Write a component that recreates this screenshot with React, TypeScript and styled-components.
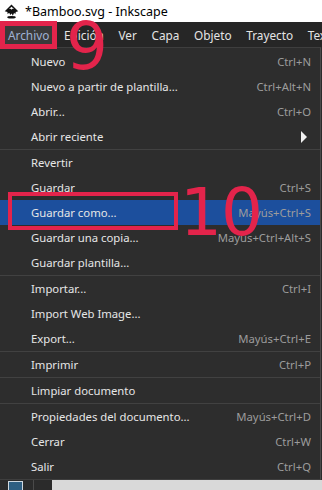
import React from "react";
import styled, { createGlobalStyle } from "styled-components";

type MenuEntry =
  | { kind: "item"; label: string; shortcut?: string; submenu?: boolean; active?: boolean }
  | { kind: "sep" };

const entries: MenuEntry[] = [
  { kind: "item", label: "Nuevo", shortcut: "Ctrl+N" },
  { kind: "item", label: "Nuevo a partir de plantilla...", shortcut: "Ctrl+Alt+N" },
  { kind: "item", label: "Abrir...", shortcut: "Ctrl+O" },
  { kind: "item", label: "Abrir reciente", submenu: true },
  { kind: "sep" },
  { kind: "item", label: "Revertir" },
  { kind: "item", label: "Guardar", shortcut: "Ctrl+S" },
  { kind: "item", label: "Guardar como...", shortcut: "Mayús+Ctrl+S", active: true },
  { kind: "item", label: "Guardar una copia...", shortcut: "Mayús+Ctrl+Alt+S" },
  { kind: "item", label: "Guardar plantilla..." },
  { kind: "sep" },
  { kind: "item", label: "Importar...", shortcut: "Ctrl+I" },
  { kind: "item", label: "Import Web Image..." },
  { kind: "item", label: "Export...", shortcut: "Mayús+Ctrl+E" },
  { kind: "sep" },
  { kind: "item", label: "Imprimir", shortcut: "Ctrl+P" },
  { kind: "sep" },
  { kind: "item", label: "Limpiar documento" },
  { kind: "sep" },
  { kind: "item", label: "Propiedades del documento...", shortcut: "Mayús+Ctrl+D" },
  { kind: "item", label: "Cerrar", shortcut: "Ctrl+W" },
  { kind: "item", label: "Salir", shortcut: "Ctrl+Q" },
];

const menus = ["Archivo", "Edición", "Ver", "Capa", "Objeto", "Trayecto", "Texto"];

function InkscapeLogo() {
  return (
    <svg width="15" height="15" viewBox="0 0 16 16">
      <path
        d="M8 0.5 L15.2 7.6 L12.6 8.6 L12 11 L10.8 9.2 L9.4 12.6 L8.2 10 L6.6 11.8 L5.8 9.6 L3.4 10.4 L3.8 8.4 L0.8 7.6 Z"
        fill="#111"
      />
      <path d="M8 2.8 L10.6 5.4 L8.8 5 L8 6.2 L7.2 5 L5.4 5.4 Z" fill="#fff" />
      <ellipse cx="8" cy="14.2" rx="4.6" ry="1.3" fill="#111" />
    </svg>
  );
}

export default function App() {
  return (
    <>
      <GlobalStyle />
      <Screen>
        <TitleBar>
          <InkscapeLogo />
          <TitleText>*Bamboo.svg - Inkscape</TitleText>
        </TitleBar>
        <MenuBar>
          {menus.map((m, i) => (
            <MenuBarItem key={m} $open={i === 0}>
              {m}
            </MenuBarItem>
          ))}
        </MenuBar>
        <Dropdown>
          {entries.map((e, i) =>
            e.kind === "sep" ? (
              <Separator key={i} />
            ) : (
              <Row key={i} $active={!!e.active}>
                <Label>{e.label}</Label>
                {e.shortcut && <Shortcut>{e.shortcut}</Shortcut>}
                {e.submenu && <Arrow />}
              </Row>
            )
          )}
        </Dropdown>
        <StatusStrip>
          <StripDark>
            <StripIcon />
            <StripDivider />
          </StripDark>
          <StripLight />
        </StatusStrip>

        <Callout $left={0} $top={21} $width={57} $height={28} $thick={5} />
        <StepNumber $left={66} $top={14}>9</StepNumber>
        <Callout $left={8} $top={192} $width={170} $height={38} $thick={4} />
        <StepNumber $left={180} $top={180}>10</StepNumber>
      </Screen>
    </>
  );
}

const GlobalStyle = createGlobalStyle`
  html, body {
    margin: 0;
    padding: 0;
    background: #2b2b2b;
  }
  * {
    box-sizing: border-box;
  }
`;

const Screen = styled.div`
  position: relative;
  width: 322px;
  height: 490px;
  overflow: hidden;
  display: flex;
  flex-direction: column;
  background: #2b2b2b;
  font-family: "Noto Sans", "Open Sans", sans-serif;
`;

const TitleBar = styled.div`
  height: 22px;
  flex-shrink: 0;
  display: flex;
  align-items: center;
  gap: 6px;
  padding-left: 4px;
  background: #ffffff;
`;

const TitleText = styled.span`
  font-size: 12.5px;
  color: #000;
`;

const MenuBar = styled.div`
  height: 25px;
  flex-shrink: 0;
  display: flex;
  background: #262626;
`;

const MenuBarItem = styled.div<{ $open: boolean }>`
  display: flex;
  align-items: center;
  padding: 3px 7.3px 0;
  font-size: 11.8px;
  white-space: nowrap;
  color: ${(p) => (p.$open ? "#9fb2d4" : "#e4e4e4")};
  background: ${(p) => (p.$open ? "#3a3a3a" : "transparent")};
  border-bottom: 3px solid ${(p) => (p.$open ? "#2456a3" : "transparent")};

  &:first-child {
    padding-left: 8px;
  }
`;

const Dropdown = styled.div`
  width: 321px;
  flex-shrink: 0;
  display: flex;
  flex-direction: column;
  padding-top: 1px;
  background: #2d2d2d;
  border-top: 1px solid #3e3e3e;
  border-right: 1px solid #4a4a4a;
  border-bottom: 1px solid #3e3e3e;
`;

const Row = styled.div<{ $active: boolean }>`
  height: 25px;
  display: flex;
  align-items: center;
  padding: 0 9px 0 31px;
  font-size: 11.3px;
  background: ${(p) => (p.$active ? "#1c4f9d" : "transparent")};
`;

const Label = styled.span`
  flex: 1;
  color: #e6e6e6;
  white-space: nowrap;
`;

const Shortcut = styled.span`
  color: #9c9c9c;
  white-space: nowrap;
`;

const Arrow = styled.span`
  width: 0;
  height: 0;
  margin-right: 4px;
  border-top: 6px solid transparent;
  border-bottom: 6px solid transparent;
  border-left: 6px solid #f0f0f0;
`;

const Separator = styled.div`
  height: 1px;
  background: #414141;
`;

const StatusStrip = styled.div`
  flex: 1;
  display: flex;
`;

const StripDark = styled.div`
  width: 52px;
  display: flex;
  align-items: flex-end;
  padding-left: 8px;
  background: #2b2b2b;
`;

const StripIcon = styled.div`
  width: 15px;
  height: 9px;
  border: 1px solid #cfd8e0;
  border-bottom: none;
  background: #2f5f82;
`;

const StripDivider = styled.div`
  width: 1px;
  height: 100%;
  margin-left: 10px;
  background: #4a4a4a;
`;

const StripLight = styled.div`
  flex: 1;
  background: #d9d9d9;
`;

const Callout = styled.div<{ $left: number; $top: number; $width: number; $height: number; $thick: number }>`
  position: absolute;
  left: ${(p) => p.$left}px;
  top: ${(p) => p.$top}px;
  width: ${(p) => p.$width}px;
  height: ${(p) => p.$height}px;
  border: ${(p) => p.$thick}px solid #e3244b;
`;

const StepNumber = styled.div<{ $left: number; $top: number }>`
  position: absolute;
  left: ${(p) => p.$left}px;
  top: ${(p) => p.$top}px;
  font-family: "DejaVu Sans", sans-serif;
  font-size: 66px;
  line-height: 1;
  color: #e3244b;
  letter-spacing: -1px;
`;
